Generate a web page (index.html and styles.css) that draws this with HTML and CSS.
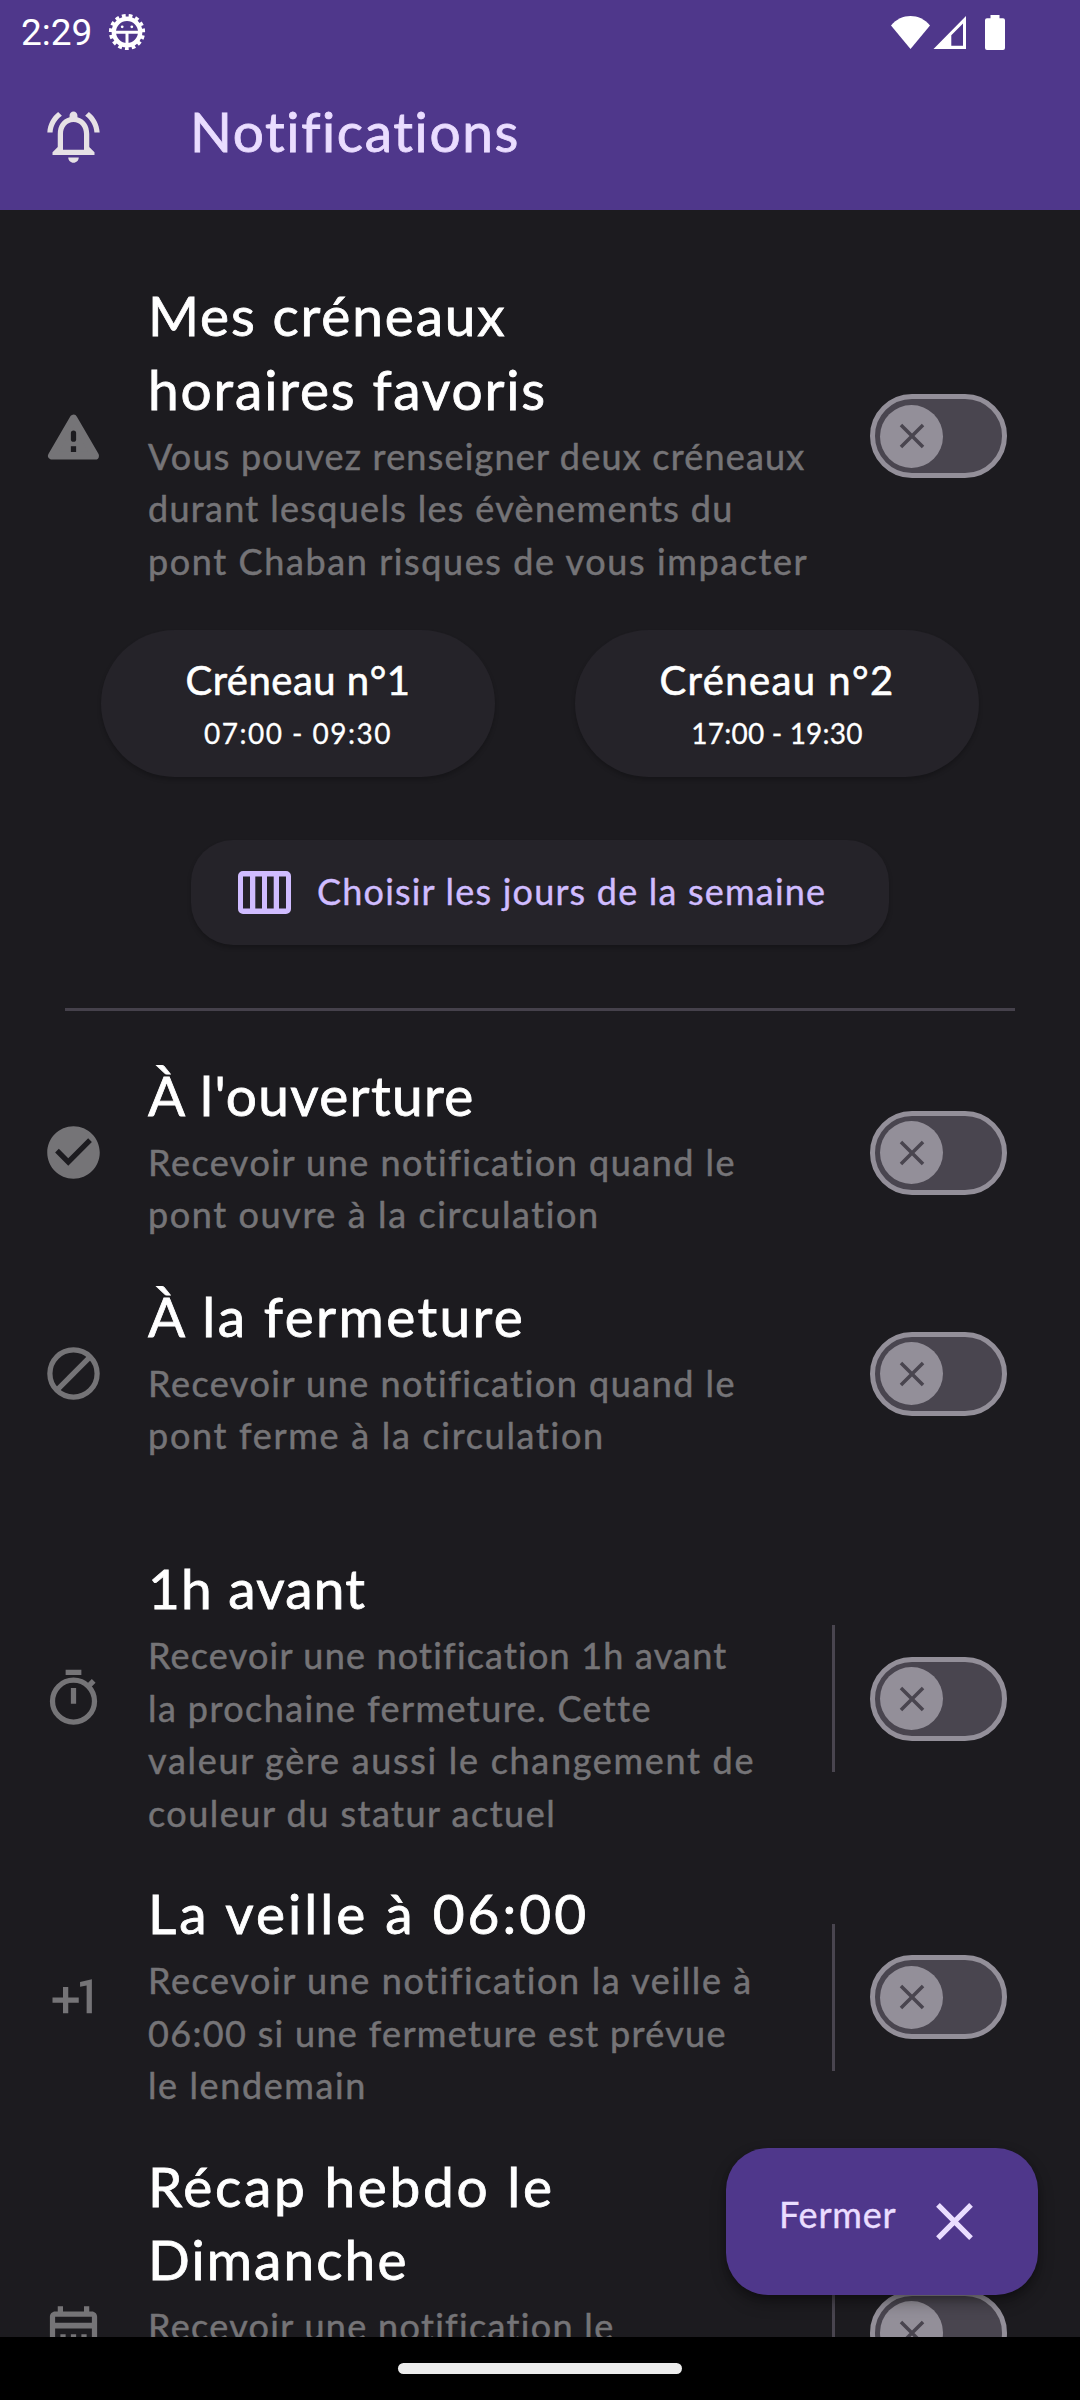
FILE: index.html
```html
<!DOCTYPE html>
<html lang="fr">
<head>
<meta charset="utf-8">
<title>Notifications</title>
<link rel="stylesheet" href="styles.css">
</head>
<body>
<svg class="defs" aria-hidden="true">
  <symbol id="cross" viewBox="0 0 24 24"><path d="M5.7 5.7 18.3 18.3M18.3 5.7 5.7 18.3" fill="none" stroke="currentColor" stroke-width="2"/></symbol>
</svg>
<div class="screen">
  <header class="header">
    <div class="status">
      <span class="clock">2:29</span>
      <svg class="gear" viewBox="0 0 38 38">
        <circle cx="19" cy="19" r="15.800" fill="none" stroke="#fff" stroke-width="4.600" pathLength="300" stroke-dasharray="11 9" stroke-dashoffset="-10"/>
        <circle cx="19" cy="19" r="13.200" fill="none" stroke="#fff" stroke-width="4.400"/>
        <path d="M8 19.200h22M19 19v12" stroke="#fff" stroke-width="3"/>
        <circle cx="14.200" cy="13.800" r="1.400" fill="#fff"/><circle cx="23.800" cy="13.800" r="1.400" fill="#fff"/>
      </svg>
      <svg class="signals" viewBox="0 0 116 36" fill="#fff">
        <path d="M0 11.5C10.5-1.1 28.5-1.1 39 11.5L19.5 35Z"/>
        <path fill-rule="evenodd" d="M75 2V35H42.5ZM72 9.5 60.3 21.3V31.8H72Z"/>
        <path d="M99.5 1h9v3.2h3.5a2 2 0 0 1 2 2V34a2 2 0 0 1-2 2H96a2 2 0 0 1-2-2V6.2a2 2 0 0 1 2-2h3.5Z"/>
      </svg>
    </div>
    <div class="appbar">
      <svg class="icon bell" viewBox="0 0 24 24"><path fill="currentColor" d="M12 22c1.1 0 2-.9 2-2h-4c0 1.1.9 2 2 2zm6-6v-5c0-3.07-1.63-5.64-4.5-6.32V4c0-.83-.67-1.5-1.5-1.5s-1.5.67-1.5 1.5v.68C7.64 5.36 6 7.92 6 11v5l-2 2v1h16v-1l-2-2zm-2 1H8v-6c0-2.48 1.51-4.5 4-4.5s4 2.02 4 4.500v6zM7.58 4.08 6.15 2.650C3.750 4.480 2.170 7.300 2.030 10.500h2c.15-2.65 1.51-4.970 3.550-6.420zm12.390 6.420h2c-.15-3.200-1.730-6.020-4.120-7.850l-1.420 1.430c2.020 1.450 3.390 3.770 3.540 6.420z"/></svg>
      <h1 class="title t16">Notifications</h1>
    </div>
  </header>

  <main class="content">
    <section class="row first">
      <svg class="icon" viewBox="0 0 24 24"><path d="M12 5.200 3.800 19.300H20.200Z" fill="currentColor" stroke="currentColor" stroke-width="3" stroke-linejoin="round"/><rect x="11" y="9.700" width="2" height="4.300" rx="1" fill="#1c1b1f"/><rect x="11" y="15.700" width="2" height="2.200" fill="#1c1b1f"/></svg>
      <div class="text">
        <h2 class="title"><span class="t18">Mes créneaux</span><span class="t18">horaires favoris</span></h2>
        <p class="desc"><span class="t12">Vous pouvez renseigner deux créneaux</span><span class="t13">durant lesquels les évènements du</span><span class="t16">pont Chaban risques de vous impacter</span></p>
      </div>
      <div class="switch"><div class="thumb"><svg viewBox="0 0 24 24"><use href="#cross"/></svg></div></div>
    </section>

    <div class="slots">
      <button class="slot slot-one"><span class="slot-name t05">Créneau n°1</span><span class="slot-time t15">07:00 - 09:30</span></button>
      <button class="slot slot-two"><span class="slot-name t14">Créneau n°2</span><span class="slot-time t02">17:00 - 19:30</span></button>
    </div>
    <button class="days">
      <svg class="week" viewBox="0 0 53 43"><path fill="currentColor" fill-rule="evenodd" d="M5 0H48a5 5 0 0 1 5 5V38a5 5 0 0 1-5 5H5a5 5 0 0 1-5-5V5a5 5 0 0 1 5-5ZM5 5.500V37.500H12V5.500ZM17.300 5.500V37.500H24V5.500ZM29 5.500V37.500H35.700V5.500ZM41 5.500V37.500H48V5.500Z"/></svg>
      <span class="t12">Choisir les jours de la semaine</span>
    </button>
    <hr class="divider">

    <section class="row open">
      <svg class="icon" viewBox="0 0 24 24"><path fill="currentColor" d="M12 2C6.480 2 2 6.480 2 12s4.480 10 10 10 10-4.480 10-10S17.520 2 12 2zm-2 15-5-5 1.410-1.410L10 14.170l7.590-7.590L19 8l-9 9z"/></svg>
      <div class="text">
        <h2 class="title"><span class="t13">À l'ouverture</span></h2>
        <p class="desc"><span class="t15">Recevoir une notification quand le</span><span class="t16">pont ouvre à la circulation</span></p>
      </div>
      <div class="switch"><div class="thumb"><svg viewBox="0 0 24 24"><use href="#cross"/></svg></div></div>
    </section>

    <section class="row closing">
      <svg class="icon" viewBox="0 0 24 24" fill="none" stroke="currentColor" stroke-width="2"><circle cx="12" cy="12" r="9"/><path d="M5.600 18.400 18.400 5.600"/></svg>
      <div class="text">
        <h2 class="title"><span class="t24">À la fermeture</span></h2>
        <p class="desc"><span class="t15">Recevoir une notification quand le</span><span class="t17">pont ferme à la circulation</span></p>
      </div>
      <div class="switch"><div class="thumb"><svg viewBox="0 0 24 24"><use href="#cross"/></svg></div></div>
    </section>

    <section class="row hour">
      <svg class="icon" viewBox="0 0 24 24" fill="none" stroke="currentColor" stroke-width="2"><circle cx="12" cy="13" r="8"/><path d="M9 2h6M12 8v6M17.500 7.500 19.700 5.300"/></svg>
      <div class="text">
        <h2 class="title"><span class="t12">1h avant</span></h2>
        <p class="desc"><span class="t12">Recevoir une notification 1h avant</span><span class="t14">la prochaine fermeture. Cette</span><span class="t17">valeur gère aussi le changement de</span><span class="t15">couleur du statur actuel</span></p>
      </div>
      <div class="bar"></div>
      <div class="switch"><div class="thumb"><svg viewBox="0 0 24 24"><use href="#cross"/></svg></div></div>
    </section>

    <section class="row eve">
      <svg class="icon" viewBox="0 0 24 24"><path fill="currentColor" d="M10 8H8v4H4v2h4v4h2v-4h4v-2h-4zm4.500-1.920V7.900l2.500-.500V18h2V5z"/></svg>
      <div class="text">
        <h2 class="title"><span class="t30">La veille à 06:00</span></h2>
        <p class="desc"><span class="t16">Recevoir une notification la veille à</span><span class="t13">06:00 si une fermeture est prévue</span><span class="t16">le lendemain</span></p>
      </div>
      <div class="bar"></div>
      <div class="switch"><div class="thumb"><svg viewBox="0 0 24 24"><use href="#cross"/></svg></div></div>
    </section>

    <section class="row weekly">
      <svg class="icon" viewBox="0 0 24 24"><path fill="currentColor" fill-rule="evenodd" d="M19 4h-1V2h-2v2H8V2H6v2H5c-1.110 0-1.990.900-1.990 2L3 20c0 1.100.890 2 2 2h14c1.100 0 2-.900 2-2V6c0-1.100-.900-2-2-2zm0 16H5V10.500h14V20zm0-11.700H5V6h14v2.300zM9 14.700H7v-2h2v2zm4 0h-2v-2h2v2zm4 0h-2v-2h2v2zm-8 4H7v-2h2v2zm4 0h-2v-2h2v2zm4 0h-2v-2h2v2z"/></svg>
      <div class="text">
        <h2 class="title"><span class="t27">Récap hebdo le</span><span class="t21">Dimanche</span></h2>
        <p class="desc"><span class="t13">Recevoir une notification le</span></p>
      </div>
      <div class="bar"></div>
      <div class="switch"><div class="thumb"><svg viewBox="0 0 24 24"><use href="#cross"/></svg></div></div>
    </section>
  </main>

  <footer class="navbar"><div class="handle"></div></footer>

  <button class="fab"><span class="t08">Fermer</span><svg viewBox="0 0 24 24"><use href="#cross"/></svg></button>
</div>
</body>
</html>
```
FILE: styles.css
```css
* { box-sizing: border-box; }

body {
  margin: 0;
  background: #1c1b1f;
  font-family: Lato, "Liberation Sans", sans-serif;
  color: #fff;
}

h1, h2, p { margin: 0; font-weight: 400; }
button { border: 0; font-family: inherit; color: inherit; }
.defs { display: none; }

.screen {
  position: relative;
  display: flex;
  flex-direction: column;
  width: 1080px;
  height: 2400px;
  overflow: hidden;
}

/* letter tracking steps */
.t02 { letter-spacing: 0.2px; }
.t05 { letter-spacing: 0.5px; }
.t08 { letter-spacing: 0.8px; }
.t12 { letter-spacing: 1.2px; }
.t13 { letter-spacing: 1.32px; }
.t14 { letter-spacing: 1.42px; }
.t15 { letter-spacing: 1.5px; }
.t16 { letter-spacing: 1.6px; }
.t17 { letter-spacing: 1.7px; }
.t18 { letter-spacing: 1.84px; }
.t21 { letter-spacing: 2.1px; }
.t24 { letter-spacing: 2.4px; }
.t27 { letter-spacing: 2.7px; }
.t30 { letter-spacing: 3px; }

/* header */
.header { flex: none; height: 210px; background: #4f378b; }

.status {
  display: flex;
  align-items: center;
  height: 63px;
  padding: 0 73px 0 21px;
}
.clock {
  width: 87px;
  padding-top: 2px;
  font: 400 37px/63px Roboto, sans-serif;
}
.gear { width: 38px; height: 38px; }
.signals { width: 116px; height: 36px; margin-left: auto; }

.appbar {
  display: flex;
  align-items: center;
  gap: 85px;
  height: 147px;
  padding-left: 42px;
}
.appbar .title { padding-bottom: 9px; color: #eaddff; }

.icon { flex: none; width: 63px; height: 63px; color: #757477; }
.bell { color: #e6e1e5; }

.title {
  font-size: 55px;
  line-height: 73.5px;
  -webkit-text-stroke: 0.8px currentColor;
}
.title span, .desc span { display: block; white-space: nowrap; }

/* settings rows */
.content { flex: none; height: 2127px; padding-top: 66px; overflow: hidden; }

.row {
  display: flex;
  align-items: center;
  padding: 0 73.5px 0 42px;
}
.text { flex: 1; margin-left: 43px; padding: 3px 0 9px; }
.desc {
  margin-top: 3.5px;
  font-size: 36px;
  line-height: 52.5px;
  color: #757477;
  -webkit-text-stroke: 0.5px currentColor;
}
.open { margin-top: 45px; }
.closing { margin-top: 27px; }
.hour { margin-top: 78.5px; }
.eve { margin-top: 26px; }
.weekly { height: 372px; margin-top: 26px; }
.weekly .text { align-self: flex-start; }

.bar { width: 2.6px; height: 147px; margin-right: 35px; background: #49454f; }

.switch {
  display: flex;
  align-items: center;
  flex: none;
  width: 136.5px;
  height: 84px;
  padding-left: 5px;
  border: 5.25px solid #938f99;
  border-radius: 42px;
  background: #49454f;
}
.thumb {
  display: grid;
  place-items: center;
  width: 63px;
  height: 63px;
  border-radius: 50%;
  background: #938f99;
  color: #49454f;
}
.thumb svg { width: 42px; height: 42px; }

/* time slots */
.slots { display: flex; gap: 80px; margin: 33.5px 0 0 101px; }
.slot {
  display: flex;
  flex-direction: column;
  align-items: center;
  height: 147px;
  padding: 24px 0 0;
  border-radius: 73.5px;
  background: #252329;
  box-shadow: 0 3px 4px rgba(0, 0, 0, 0.22);
}
.slot-one { width: 394px; }
.slot-two { width: 404px; }
.slot-name { font-size: 40px; line-height: 53px; -webkit-text-stroke: 0.6px currentColor; }
.slot-time { font-size: 28px; line-height: 43px; margin-top: 5px; -webkit-text-stroke: 0.3px currentColor; }

.days {
  display: flex;
  align-items: center;
  width: 698px;
  height: 105px;
  margin: 63px 0 0 191px;
  padding: 0 0 0 47px;
  border-radius: 42px;
  background: #252329;
  box-shadow: 0 3px 4px rgba(0, 0, 0, 0.22);
  color: #d0bcff;
  font-size: 36px;
  line-height: 52px;
}
.days span { margin-left: 26px; padding-bottom: 3px; white-space: nowrap; -webkit-text-stroke: 0.4px currentColor; }
.week { width: 53px; height: 43px; }

.divider { height: 3px; margin: 63px 65px 0; border: 0; background: #45414b; }

/* system navigation */
.navbar {
  display: grid;
  place-items: center;
  flex: none;
  height: 63px;
  background: #000;
}
.handle { width: 284px; height: 11px; border-radius: 5.5px; background: #ececec; }

/* floating button over the list */
.fab {
  position: absolute;
  right: 42px;
  bottom: 105px;
  display: flex;
  align-items: center;
  width: 312px;
  height: 147px;
  padding: 0 0 0 53px;
  border-radius: 42px;
  background: #4f378b;
  box-shadow: 0 8px 16px rgba(0, 0, 0, 0.3), 0 3px 6px rgba(0, 0, 0, 0.2);
  color: #eaddff;
  font-size: 36px;
  line-height: 52px;
}
.fab span { width: 144px; padding-bottom: 15px; text-align: left; -webkit-text-stroke: 0.4px currentColor; }
.fab svg { width: 63px; height: 63px; }
```
